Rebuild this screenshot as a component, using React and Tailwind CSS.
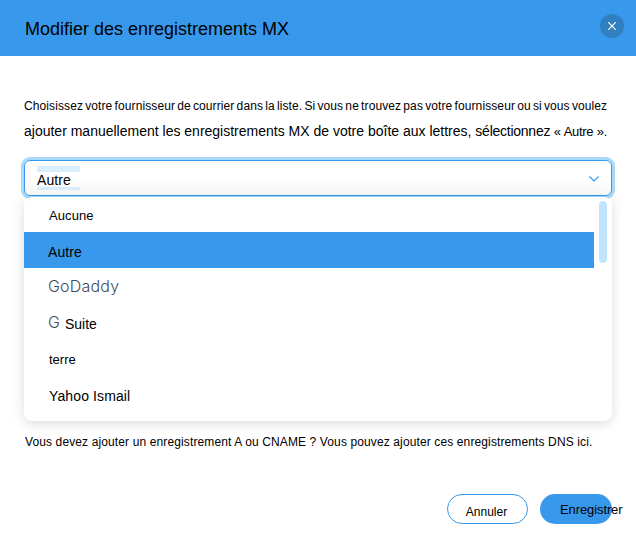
import React from "react";

const options = [
  { label: "Aucune", text: "h-[35px] pl-[25px] pt-[11px] text-[13px] tracking-[0.1px] text-black" },
  { label: "Autre", text: "h-9 pl-6 pt-3 text-[14px] tracking-[0.1px] bg-[#3899ec] text-black" },
  { label: "GoDaddy", text: "h-9 pl-6 pt-[10px] font-['Inter',sans-serif] font-light text-[16px] tracking-[0.2px] text-[#3b4d5c]" },
  { label: "Suite", prefix: "G", text: "h-9 flex pl-6 pt-3 text-[14px] text-black" },
  { label: "terre", text: "h-9 pl-[25px] pt-3 text-[13px] text-black" },
  { label: "Yahoo Ismail", text: "h-9 pl-[25px] pt-3 text-[14px] tracking-[0.12px] text-black" },
];

function Header() {
  return (
    <header className="flex h-14 items-start justify-between bg-[#3899ec] pl-[25px] pr-3">
      <h1 className="pt-[19px] text-[18px] leading-5">Modifier des enregistrements MX</h1>
      <button className="mt-[14px] flex size-6 items-center justify-center rounded-full bg-[#307fc1]" aria-label="Fermer">
        <svg width="8" height="8" viewBox="0 0 8 8" fill="none" stroke="white" strokeWidth="1.2">
          <path d="M0.3 0.3 7.7 7.7M7.7 0.3 0.3 7.7" />
        </svg>
      </button>
    </header>
  );
}

function Select() {
  return (
    <div className="flex h-9 items-start justify-between rounded-[6px] border border-[#3899ec] bg-gradient-to-b from-white from-50% to-[#f9f9f9] pl-3 pr-[12px] shadow-[0_0_0_3px_#a8d8fa]">
      <span className="mt-[5px] flex h-6 w-[43px] items-center border-t-[6px] border-b-[3px] border-[#daeffe] pt-[2px] text-[14px] leading-[15px] tracking-[0.1px]">Autre</span>
      <svg className="mt-[15px]" width="10" height="6" viewBox="0 0 10 6" fill="none" stroke="#3899ec" strokeWidth="1.2">
        <path d="M0.4 0.5 5 5 9.6 0.5" />
      </svg>
    </div>
  );
}

function Menu() {
  return (
    <div className="relative mt-px flex h-[224px] justify-between rounded-lg bg-white pr-[5px] shadow-[0_4px_8px_0_rgba(22,45,61,0.09),0_0_18px_0_rgba(22,45,61,0.08)]">
      <ul className="w-[570px]">
        {options.map((o) => (
          <li key={o.label} className={"whitespace-nowrap leading-4 " + o.text}>
            {o.prefix && <span className="-mt-[2px] w-[17px] font-['Inter',sans-serif] text-[16px] font-light text-[#3b4d5c]">{o.prefix}</span>}
            {o.label}
          </li>
        ))}
      </ul>
      <div className="mt-1 h-[62px] w-2 rounded-full bg-[#c1e4fe]" />
    </div>
  );
}

export default function App() {
  return (
    <div className="flex h-[548px] w-[636px] flex-col overflow-hidden bg-white font-['Liberation_Sans',Arial,sans-serif] text-black">
      <Header />
      <main className="flex flex-col px-6">
        <div className="h-[104px] whitespace-nowrap pt-[42px]">
          <p className="h-6 text-[12px] leading-4 tracking-[0.1px] [word-spacing:-1.25px]">Choisissez votre fournisseur de courrier dans la liste. Si vous ne trouvez pas votre fournisseur ou si vous voulez</p>
          <p className="text-[14px] leading-[18px]">
            ajouter manuellement les enregistrements MX de votre boîte aux lettres, <span className="tracking-[-0.25px]">sélectionnez </span>
            <span className="text-[13px] tracking-[-0.3px] [word-spacing:0.3px]">« Autre ».</span>
          </p>
        </div>
        <Select />
        <Menu />
        <p className="mt-[13px] whitespace-nowrap pl-px text-[12px] leading-4 tracking-[0.12px]">Vous devez ajouter un enregistrement A ou CNAME ? Vous pouvez ajouter ces enregistrements DNS ici.</p>
      </main>
      <footer className="mt-[44px] flex justify-end gap-3 pr-6">
        <button className="h-[30px] w-[81px] rounded-full border border-[#3899ec] pr-[2px] pt-[6px] text-[12px]">Annuler</button>
        <button className="flex h-[30px] w-[72px] items-center whitespace-nowrap rounded-full bg-[#3899ec] pl-5 pt-[2px] text-[13px] tracking-[-0.1px]">Enregistrer</button>
      </footer>
    </div>
  );
}
